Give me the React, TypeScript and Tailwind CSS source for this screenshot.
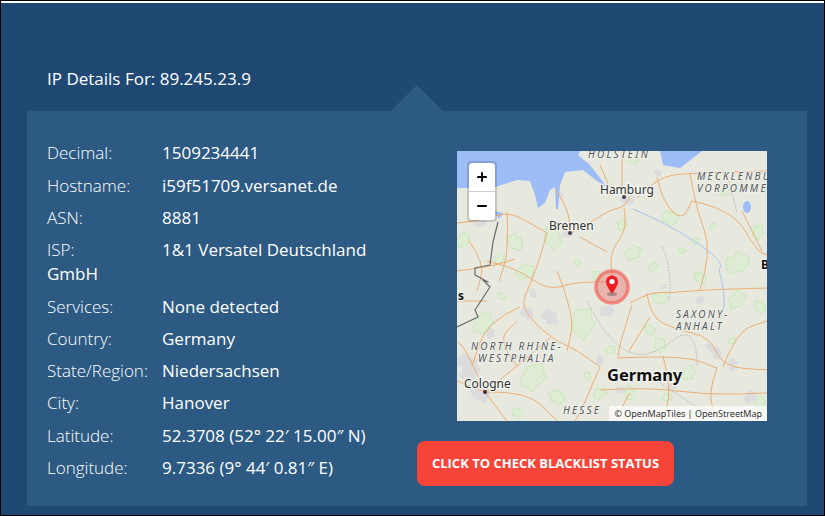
import { Minus, Plus } from 'lucide-react';

const details = [
  { label: 'Decimal:', value: '1509234441' },
  { label: 'Hostname:', value: 'i59f51709.versanet.de' },
  { label: 'ASN:', value: '8881' },
  { label: 'ISP:', value: '1&1 Versatel Deutschland GmbH' },
  { label: 'Services:', value: 'None detected' },
  { label: 'Country:', value: 'Germany' },
  { label: 'State/Region:', value: 'Niedersachsen' },
  { label: 'City:', value: 'Hanover' },
  { label: 'Latitude:', value: '52.3708 (52° 22′ 15.00″ N)' },
  { label: 'Longitude:', value: '9.7336 (9° 44′ 0.81″ E)' },
];

const roads = [
  [113, 82, 133, 72, 153, 59, 167, 56, 173, 46],
  [167, 57, 171, 77, 153, 101, 155, 126],
  [123, 86, 150, 101],
  [90, 82, 70, 70, 50, 61, 26, 69, 0, 72],
  [90, 82, 83, 107, 73, 134, 63, 156, 93, 187, 120, 199, 143, 216],
  [165, 0, 165, 44],
  [143, 14, 153, 37],
  [180, 47, 200, 26, 233, 22, 310, 20],
  [235, 50, 275, 58, 300, 100, 310, 104],
  [175, 154, 163, 192, 161, 206],
  [173, 152, 193, 141, 213, 142, 243, 139, 310, 137],
  [190, 142, 193, 166, 220, 179, 253, 186, 266, 216, 310, 219],
  [143, 216, 133, 239, 123, 262, 118, 270],
  [160, 207, 226, 204, 260, 217],
  [143, 239, 190, 236, 250, 244, 310, 242],
  [28, 241, 0, 230],
  [28, 241, 50, 270],
  [28, 241, 60, 215, 93, 187],
  [28, 241, 10, 200, 0, 190],
  [28, 241, 70, 240, 100, 270],
  [155, 131, 120, 130, 92, 140, 60, 118, 30, 110],
  [0, 120, 33, 116, 58, 108],
  [63, 156, 30, 170, 15, 215],
  [266, 216, 280, 180, 310, 170],
  [243, 139, 255, 100, 240, 60, 233, 22],
  [100, 40, 112, 60, 113, 82],
  [206, 205, 215, 240, 205, 270],
  [12, 90, 28, 112, 20, 140],
  [50, 61, 52, 100, 42, 130],
  [193, 166, 172, 200],
  [100, 120, 118, 165, 110, 200],
  [260, 217, 250, 244, 262, 270],
  [285, 60, 305, 100],
  [0, 150, 30, 150],
  [200, 26, 205, 50, 225, 70, 235, 50],
  [60, 215, 40, 190, 60, 170],
  [173, 242, 160, 262, 172, 270],
];

const forests = [
  [96, 87, 13], [6, 89, 9], [58, 91, 11], [68, 121, 11], [176, 102, 10], [165, 74, 7], [213, 67, 10], [196, 116, 6],
  [243, 126, 8], [280, 112, 15], [268, 41, 6], [176, 9, 6], [301, 81, 8], [126, 172, 18], [203, 147, 9], [280, 149, 11],
  [193, 179, 7], [203, 194, 9], [153, 199, 6], [76, 226, 17], [100, 246, 10], [143, 242, 8], [173, 242, 8], [26, 172, 14],
  [303, 156, 8], [303, 252, 8], [210, 246, 6], [238, 90, 5], [140, 125, 6], [42, 108, 7], [232, 222, 9], [60, 262, 7],
  [255, 75, 4], [120, 112, 4], [225, 100, 4], [45, 145, 5], [240, 260, 6], [275, 190, 5], [130, 225, 5],
];

const cities = [
  [23, 71, 8], [111, 82, 7], [171, 49, 9], [201, 22, 5], [103, 44, 4], [76, 142, 6], [33, 182, 7], [93, 166, 11],
  [70, 162, 9], [13, 219, 15], [23, 242, 13], [6, 209, 9], [143, 209, 6], [163, 239, 6], [260, 202, 8], [276, 214, 8],
  [253, 196, 6], [215, 236, 6], [243, 149, 6], [293, 246, 9], [150, 160, 9], [206, 136, 4],
];

// wobbly closed outline around a point, so patches don't look like plain circles
const blob = ([cx, cy, r]: number[]) => {
  const pts = Array.from({ length: 12 }, (_, i) => {
    const a = (i / 12) * Math.PI * 2;
    const d = r * (0.72 + 0.28 * Math.sin(i * 2.4 + cx * 0.7) * Math.cos(i * 1.3 + cy));
    return `${(cx + Math.cos(a) * d).toFixed(1)},${(cy + Math.sin(a) * d).toFixed(1)}`;
  });
  return pts.join(' ');
};

// rounds the corners of a road without swinging past its points
const smooth = (p: number[]) => {
  let d = `M${p[0]} ${p[1]}`;
  for (let i = 2; i < p.length - 2; i += 2) {
    d += `Q${p[i]} ${p[i + 1]} ${(p[i] + p[i + 2]) / 2} ${(p[i + 1] + p[i + 3]) / 2}`;
  }
  return `${d}L${p[p.length - 2]} ${p[p.length - 1]}`;
};

const MapLabel = ({ x, y, lines }: { x: number; y: number; lines: string[] }) => (
  <text x={x} y={y} fontFamily="'Noto Sans', sans-serif" fontSize="10" fontStyle="italic" letterSpacing="2.2" fill="#55585f" stroke="#eef0e8" strokeWidth="2" paintOrder="stroke">
    {lines.map((line, i) => (
      <tspan key={line} x={x + (line.startsWith(' ') ? 7 : 0)} dy={i === 0 ? 0 : 12}>
        {line.trim()}
      </tspan>
    ))}
  </text>
);

const CityLabel = ({ x, y, size = 12, bold = false, children }: { x: number; y: number; size?: number; bold?: boolean; children: string }) => (
  <text x={x} y={y} fontFamily="'Noto Sans', sans-serif" fontSize={size} fontWeight={bold ? 700 : 400} fill={bold ? '#111' : '#333'} stroke="#f2f3ee" strokeWidth="2.5" paintOrder="stroke">
    {children}
  </text>
);

const MapDrawing = () => (
  <svg width="310" height="270" viewBox="0 0 310 270" className="block">
    <rect width="310" height="270" fill="#e7e9df" />
    {cities.map((c) => (
      <polygon key={c.join()} points={blob(c)} fill="#dcdcde" />
    ))}
    {forests.map((f) => (
      <polygon key={f.join()} points={blob(f)} fill="#dfecd4" stroke="#9be48c" strokeWidth="0.7" strokeDasharray="1.4 1" strokeLinejoin="round" />
    ))}
    <path
      d="M0 0H123L121 4 133 14 150 36 140 30 126 19 108 21 103 34 101 58 99 58 98 36 93 39 88 52 81 57 78 44 73 30 60 29 38 36 16 37 0 37Z"
      fill="#9dbdf7"
    />
    <path d="M203 0 206 14 223 17 240 4 245 0Z" fill="#9dbdf7" />
    <ellipse cx="290" cy="56" rx="4" ry="6" fill="#9dbdf7" />
    <path d="M37 60 46 62 42 68Z" fill="#9dbdf7" />
    <path d="M176 58Q210 72 240 92T262 118M262 118Q270 150 266 160" fill="none" stroke="#a9c4ee" strokeWidth="1" />
    {roads.map((r) => (
      <path key={r.join()} d={smooth(r)} fill="none" stroke="#ecae74" strokeWidth="1" />
    ))}
    <path d="M205 95Q216 120 212 150M130 150Q150 190 170 200T215 190T240 215M272 30 280 62M200 230Q230 250 250 262" fill="none" stroke="#b9b9b4" strokeWidth="0.9" strokeDasharray="2 1" />
    <polyline points="41,71 36,91 33,114 18,117 18,124 31,131 26,129 33,136 18,159 21,166 0,176" fill="none" stroke="#686a6c" strokeWidth="1.2" strokeLinejoin="round" />
    <MapLabel x={131} y={7} lines={['HOLSTEIN']} />
    <MapLabel x={240} y={29} lines={['MECKLENBU', 'VORPOMME']} />
    <MapLabel x={219} y={167} lines={['SAXONY-', 'ANHALT']} />
    <MapLabel x={14} y={199} lines={['NORTH RHINE-', ' WESTPHALIA']} />
    <MapLabel x={106} y={263} lines={['HESSE']} />
    <CityLabel x={143} y={43}>Hamburg</CityLabel>
    <CityLabel x={92} y={79}>Bremen</CityLabel>
    <CityLabel x={7} y={237}>Cologne</CityLabel>
    <CityLabel x={150} y={230} size={16.500} bold>Germany</CityLabel>
    <CityLabel x={1} y={149} size={12} bold>s</CityLabel>
    <CityLabel x={304} y={118} size={12} bold>B</CityLabel>
    <circle cx="167" cy="46" r="2" fill="#444" />
    <circle cx="113" cy="82" r="2" fill="#444" />
    <circle cx="28" cy="241" r="2" fill="#333" />
    <circle cx="155" cy="136" r="16" fill="#e8605c" fillOpacity="0.38" stroke="#f4625e" strokeOpacity="0.7" strokeWidth="3.500" />
    <ellipse cx="155" cy="143" rx="5" ry="2" fill="#000" fillOpacity="0.25" />
    <path d="M155 143C151 137 149 133.500 149 130.500A6 6 0 0 1 161 130.500C161 133.500 159 137 155 143Z" fill="#ee1c25" />
    <circle cx="155" cy="130.500" r="2.600" fill="#fff" />
  </svg>
);

export default function App() {
  return (
    <div className="h-[516px] w-[825px] overflow-hidden bg-black px-px pb-px pt-px font-['Open_Sans',sans-serif]">
      <div className="h-full border-t-2 border-white bg-[#1f4973]">
        <div className="ml-[26px] w-[780px] pt-[64px]">
          <h1 className="px-5 pb-5 text-[17px] font-normal leading-6 text-white">IP Details For: 89.245.23.9</h1>
          <div className="relative flex h-[395px] bg-[#2d5a82] pl-5 pt-[30px]">
            <span className="absolute left-[364px] top-[-26px] h-0 w-0 border-x-[26px] border-b-[26px] border-x-transparent border-b-[#2d5a82]" />
            <div className="w-[350px] shrink-0 pt-[0.35px] text-[17px] text-white">
              {details.map((row) => (
                <p key={row.label} className="mb-[8.3px] leading-6">
                  <span className="inline-block w-[115px] font-light">{row.label}</span>
                  {row.value}
                </p>
              ))}
            </div>
            <div className="ml-5 pt-2.5">
              <div className="relative ml-10 h-[270px] w-[310px] overflow-hidden">
                <MapDrawing />
                <div className="absolute left-2.5 top-2.5 w-[30px] rounded border-2 border-black/15 bg-clip-padding">
                  <div className="flex h-[29px] items-center justify-center rounded-t-sm border-b border-[#ccc] bg-white text-black">
                    <Plus size={14} strokeWidth={3.2} />
                  </div>
                  <div className="flex h-7 items-center justify-center rounded-b-sm bg-white text-black">
                    <Minus size={14} strokeWidth={3.2} />
                  </div>
                </div>
                <div className="absolute bottom-0 right-0 bg-white/70 px-[5px] text-[9px] leading-[15px] text-[#333] font-['Noto_Sans',sans-serif]">
                  © OpenMapTiles | OpenStreetMap
                </div>
              </div>
              <button className="mt-5 h-[45px] w-[257px] rounded-lg bg-[#f64538] text-center text-[13px] font-bold uppercase text-white">
                Click to check blacklist status
              </button>
            </div>
          </div>
        </div>
      </div>
    </div>
  );
}
